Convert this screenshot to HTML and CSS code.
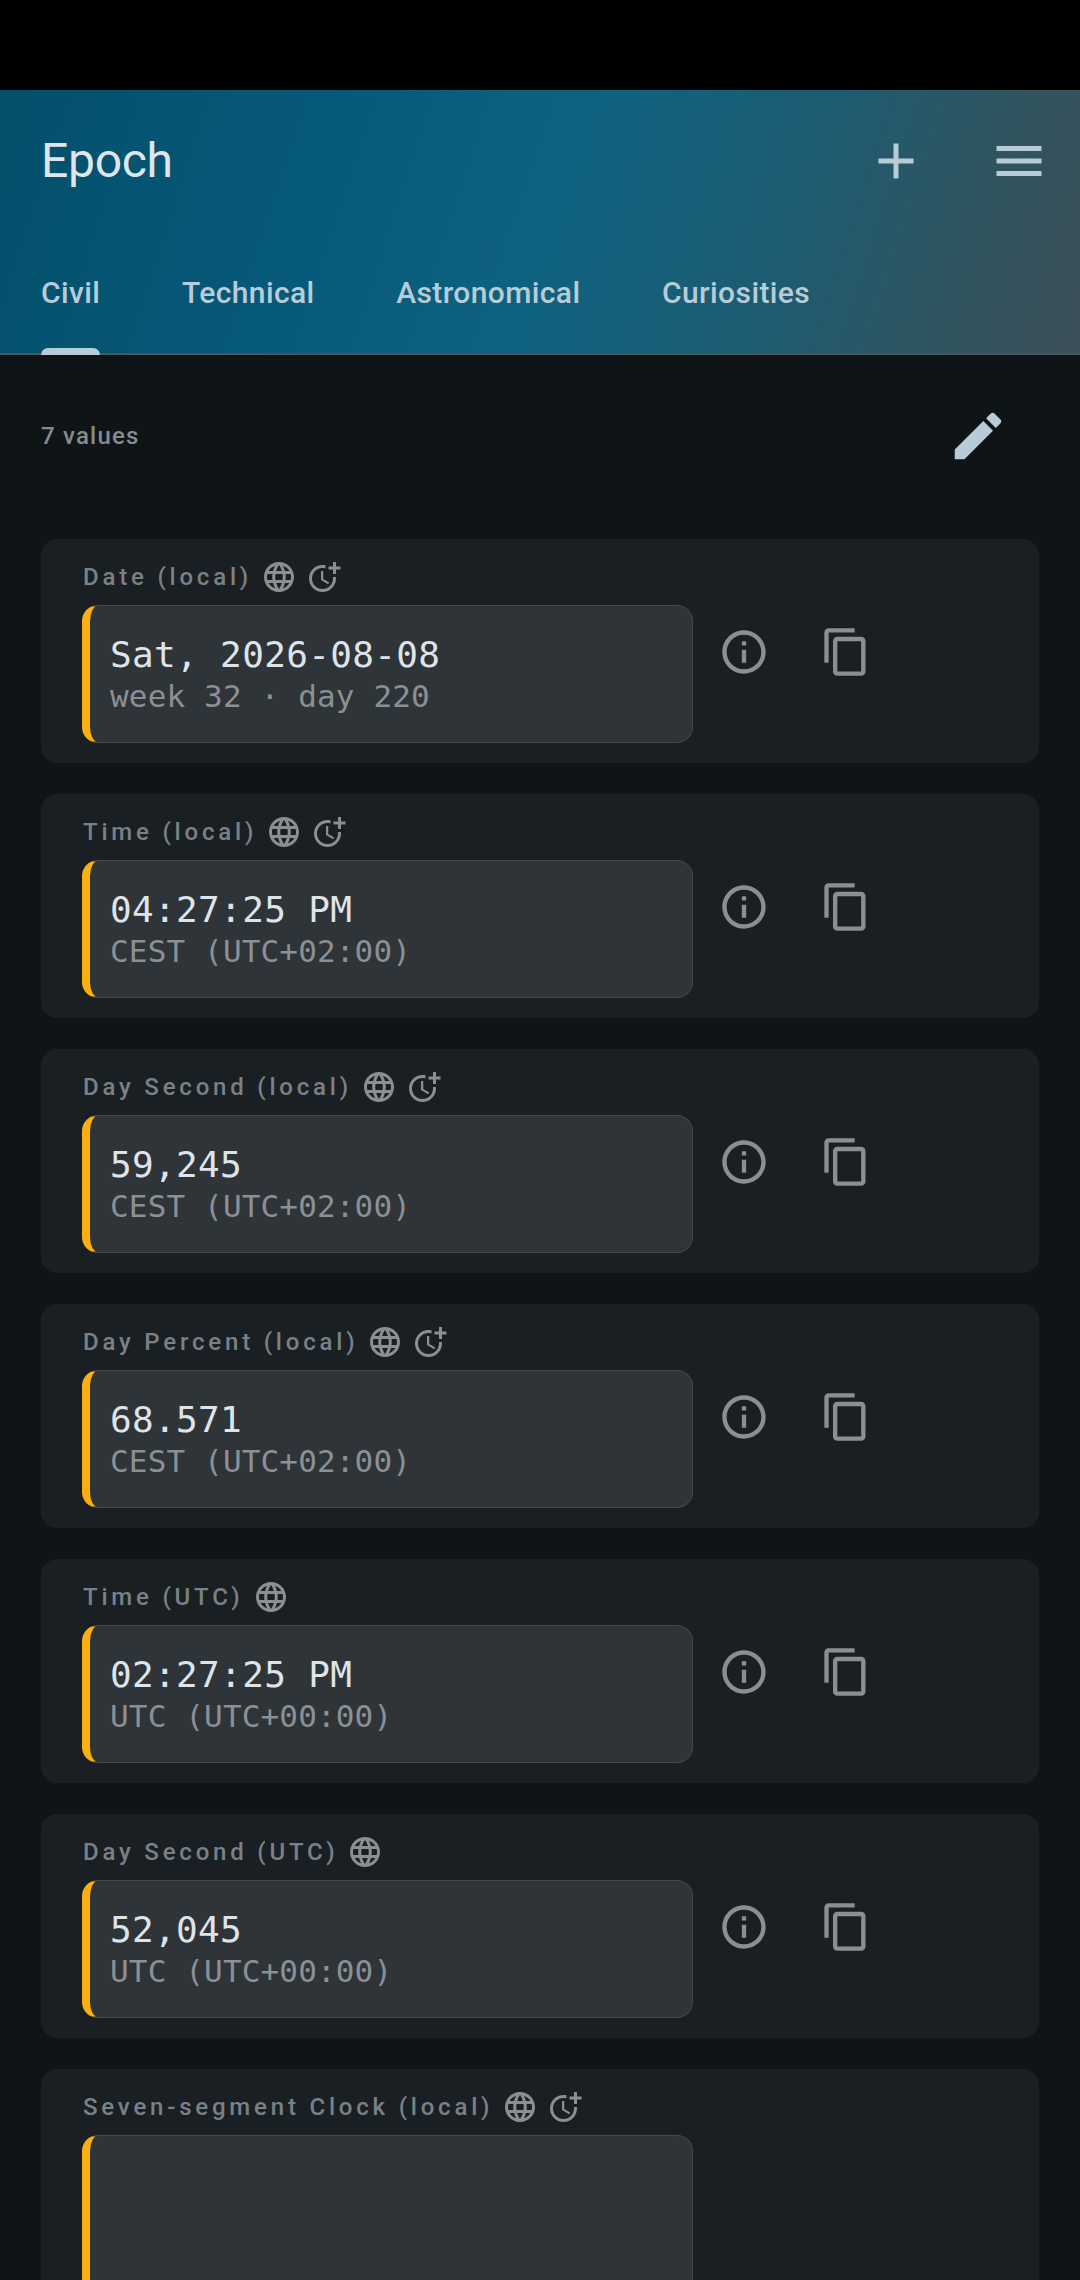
FILE: index.html
```html
<!doctype html>
<html lang="en">
<head>
    <meta charset="utf-8">
    <title>Epoch</title>
    <link rel="stylesheet" href="styles.css">
</head>
<body>
<svg class="defs" aria-hidden="true">
    <symbol id="icGlobe" viewBox="0 0 24 24"><path d="M11.99 2C6.47 2 2 6.48 2 12s4.47 10 9.99 10C17.52 22 22 17.52 22 12S17.52 2 11.99 2zm6.93 6h-2.95c-.32-1.25-.78-2.45-1.38-3.56 1.84.63 3.37 1.91 4.33 3.56zM12 4.04c.83 1.2 1.48 2.53 1.91 3.96h-3.82c.43-1.43 1.08-2.76 1.91-3.96zM4.26 14C4.1 13.36 4 12.69 4 12s.1-1.36.26-2h3.38c-.08.66-.14 1.32-.14 2 0 .68.06 1.34.14 2H4.26zm.82 2h2.95c.32 1.25.78 2.45 1.38 3.56-1.84-.63-3.37-1.9-4.33-3.56zm2.95-8H5.08c.96-1.66 2.49-2.93 4.33-3.56C8.81 5.55 8.35 6.75 8.03 8zM12 19.96c-.83-1.2-1.48-2.53-1.91-3.96h3.82c-.43 1.43-1.08 2.76-1.91 3.96zM14.34 14H9.66c-.09-.66-.16-1.32-.16-2 0-.68.07-1.35.16-2h4.68c.09.65.16 1.32.16 2 0 .68-.07 1.34-.16 2zm.25 5.56c.6-1.11 1.06-2.31 1.38-3.56h2.95c-.96 1.65-2.49 2.93-4.33 3.56zM16.36 14c.08-.66.14-1.32.14-2 0-.68-.06-1.34-.14-2h3.38c.16.64.26 1.31.26 2s-.1 1.36-.26 2h-3.38z"/></symbol>
    <symbol id="icMoreTime" viewBox="0 0 24 24"><path d="M10 8v6l4.7 2.9.8-1.2-4-2.4V8zM17.92 12c.05.33.08.66.08 1 0 3.9-3.1 7-7 7s-7-3.1-7-7 3.1-7 7-7c.7 0 1.37.1 2 .29V4.23C12.36 4.08 11.69 4 11 4c-5 0-9 4-9 9s4 9 9 9 9-4 9-9c0-.34-.02-.67-.06-1h-2.02zM20 5V2h-2v3h-3v2h3v3h2V7h3V5z"/></symbol>
    <symbol id="icInfo" viewBox="0 0 24 24"><path d="M11 7h2v2h-2zm0 4h2v6h-2zm1-9C6.48 2 2 6.48 2 12s4.48 10 10 10 10-4.48 10-10S17.52 2 12 2zm0 18c-4.41 0-8-3.59-8-8s3.59-8 8-8 8 3.59 8 8-3.59 8-8 8z"/></symbol>
    <symbol id="icCopy" viewBox="0 0 24 24"><path d="M16 1H4c-1.1 0-2 .9-2 2v14h2V3h12V1zm3 4H8c-1.1 0-2 .9-2 2v14c0 1.1.9 2 2 2h11c1.1 0 2-.9 2-2V7c0-1.1-.9-2-2-2zm0 16H8V7h11v14z"/></symbol>
</svg>

<div class="statusBar"></div>

<!--  header  -->
<header class="appHeader">
    <div class="toolbar">
        <h1 class="appTitle">Epoch</h1>
        <svg class="barIcon addIcon" viewBox="0 0 24 24"><path d="M19 13h-6v6h-2v-6H5v-2h6V5h2v6h6v2z"/></svg>
        <svg class="barIcon" viewBox="0 0 24 24"><path d="M3 18h18v-2H3v2zm0-5h18v-2H3v2zm0-7v2h18V6H3z"/></svg>
    </div>
    <nav class="tabs">
        <span class="tab active">Civil</span>
        <span class="tab">Technical</span>
        <span class="tab">Astronomical</span>
        <span class="tab">Curiosities</span>
    </nav>
</header>

<div class="listHead">
    <span class="valueCount">7 values</span>
    <svg class="editIcon" viewBox="0 0 24 24"><path d="M3 17.25V21h3.75L17.81 9.94l-3.75-3.75L3 17.25zM20.71 7.04c.39-.39.39-1.02 0-1.41l-2.34-2.34c-.39-.39-1.02-.39-1.41 0l-1.83 1.83 3.75 3.75 1.83-1.83z"/></svg>
</div>

<!--  value cards  -->
<main class="cardList">
    <section class="card">
        <div class="cardLabel">
            <span>Date (local)</span>
            <svg class="tagIcon"><use href="#icGlobe"/></svg>
            <svg class="tagIcon"><use href="#icMoreTime"/></svg>
        </div>
        <div class="cardRow">
            <div class="valueBox">
                <p class="mainValue">Sat, 2026-08-08</p>
                <p class="subValue">week 32 · day 220</p>
            </div>
            <div class="actions">
                <svg class="actionIcon"><use href="#icInfo"/></svg>
                <svg class="actionIcon"><use href="#icCopy"/></svg>
            </div>
        </div>
    </section>

    <section class="card">
        <div class="cardLabel">
            <span>Time (local)</span>
            <svg class="tagIcon"><use href="#icGlobe"/></svg>
            <svg class="tagIcon"><use href="#icMoreTime"/></svg>
        </div>
        <div class="cardRow">
            <div class="valueBox">
                <p class="mainValue">04:27:25 PM</p>
                <p class="subValue">CEST (UTC+02:00)</p>
            </div>
            <div class="actions">
                <svg class="actionIcon"><use href="#icInfo"/></svg>
                <svg class="actionIcon"><use href="#icCopy"/></svg>
            </div>
        </div>
    </section>

    <section class="card">
        <div class="cardLabel">
            <span>Day Second (local)</span>
            <svg class="tagIcon"><use href="#icGlobe"/></svg>
            <svg class="tagIcon"><use href="#icMoreTime"/></svg>
        </div>
        <div class="cardRow">
            <div class="valueBox">
                <p class="mainValue">59,245</p>
                <p class="subValue">CEST (UTC+02:00)</p>
            </div>
            <div class="actions">
                <svg class="actionIcon"><use href="#icInfo"/></svg>
                <svg class="actionIcon"><use href="#icCopy"/></svg>
            </div>
        </div>
    </section>

    <section class="card">
        <div class="cardLabel">
            <span>Day Percent (local)</span>
            <svg class="tagIcon"><use href="#icGlobe"/></svg>
            <svg class="tagIcon"><use href="#icMoreTime"/></svg>
        </div>
        <div class="cardRow">
            <div class="valueBox">
                <p class="mainValue">68.571</p>
                <p class="subValue">CEST (UTC+02:00)</p>
            </div>
            <div class="actions">
                <svg class="actionIcon"><use href="#icInfo"/></svg>
                <svg class="actionIcon"><use href="#icCopy"/></svg>
            </div>
        </div>
    </section>

    <section class="card">
        <div class="cardLabel">
            <span>Time (UTC)</span>
            <svg class="tagIcon"><use href="#icGlobe"/></svg>
        </div>
        <div class="cardRow">
            <div class="valueBox">
                <p class="mainValue">02:27:25 PM</p>
                <p class="subValue">UTC (UTC+00:00)</p>
            </div>
            <div class="actions">
                <svg class="actionIcon"><use href="#icInfo"/></svg>
                <svg class="actionIcon"><use href="#icCopy"/></svg>
            </div>
        </div>
    </section>

    <section class="card">
        <div class="cardLabel">
            <span>Day Second (UTC)</span>
            <svg class="tagIcon"><use href="#icGlobe"/></svg>
        </div>
        <div class="cardRow">
            <div class="valueBox">
                <p class="mainValue">52,045</p>
                <p class="subValue">UTC (UTC+00:00)</p>
            </div>
            <div class="actions">
                <svg class="actionIcon"><use href="#icInfo"/></svg>
                <svg class="actionIcon"><use href="#icCopy"/></svg>
            </div>
        </div>
    </section>

    <section class="card">
        <div class="cardLabel">
            <span>Seven-segment Clock (local)</span>
            <svg class="tagIcon"><use href="#icGlobe"/></svg>
            <svg class="tagIcon"><use href="#icMoreTime"/></svg>
        </div>
        <div class="cardRow">
            <div class="valueBox clockBox"></div>
        </div>
    </section>
</main>
</body>
</html>
```
FILE: styles.css
```css
* {
    margin: 0;
    padding: 0;
    box-sizing: border-box;
}

html, body {
    width: 1080px;
    height: 2280px;
    overflow: hidden;
    background: #0f1417;
    font-family: Roboto, "Noto Sans", sans-serif;
}

.defs {
    display: none;
}

.statusBar {
    height: 90px;
    background: #000;
}

.appHeader {
    height: 265px;
    display: flex;
    flex-direction: column;
    background: linear-gradient(108deg, #024f69 0%, #07597a 30%, #0f627f 52%, #1c5c73 70%, #30545f 88%, #3b4e57 100%);
    border-bottom: 2px solid #4a575c;
}

.toolbar {
    height: 140px;
    display: flex;
    align-items: center;
    padding: 2px 31px 0 41px;
}

.appTitle {
    flex: 1;
    margin-top: -1px;
    font-size: 48px;
    font-weight: 400;
    letter-spacing: -0.3px;
    color: #dfe5e9;
}

.barIcon {
    width: 60px;
    height: 60px;
    fill: #b8ccd7;
}

.addIcon {
    margin-right: 63px;
}

.tabs {
    flex: 1;
    display: flex;
    gap: 81.5px;
    padding-left: 41px;
}

.tab {
    position: relative;
    padding-top: 43px;
    font-size: 30px;
    font-weight: 500;
    line-height: 40px;
    letter-spacing: 0.4px;
    color: #b8ccd7;
}

.tab.active::after {
    content: "";
    position: absolute;
    left: 0;
    right: 0;
    bottom: -2px;
    height: 7px;
    border-radius: 7px 7px 0 0;
    background: #b8ccd7;
}

.listHead {
    height: 162px;
    display: flex;
    align-items: center;
    justify-content: space-between;
    padding: 0 71px 0 41px;
    margin-bottom: 22px;
}

.valueCount {
    font-size: 24px;
    font-weight: 500;
    letter-spacing: 1.2px;
    color: #858c90;
}

.editIcon {
    width: 62px;
    height: 62px;
    fill: #b8ccd7;
}

.cardList {
    display: flex;
    flex-direction: column;
    gap: 31px;
    padding: 0 41px;
}

.card {
    flex: none;
    padding: 20px 0 20px 41px;
    border-radius: 16px;
    background: #1a1f23;
}

.cardLabel {
    height: 36px;
    display: flex;
    align-items: center;
    gap: 9px;
    margin-bottom: 10px;
    padding-left: 1px;
    font-size: 24px;
    font-weight: 500;
    letter-spacing: 3.8px;
    color: #7a8186;
}

.tagIcon {
    width: 36px;
    height: 36px;
    fill: #8a8f93;
}

.cardRow {
    display: flex;
    align-items: flex-start;
}

.valueBox {
    width: 611px;
    height: 138px;
    padding: 27px 0 0 20px;
    background: #2f3438;
    border: 1px solid #45484a;
    border-left: 8px solid #fbb010;
    border-radius: 16px;
    font-family: "DejaVu Sans Mono", "Liberation Mono", monospace;
}

.clockBox {
    height: 300px;
}

.mainValue {
    font-size: 36px;
    line-height: 43px;
    letter-spacing: 0.35px;
    color: #dfe4e8;
}

.subValue {
    font-size: 31px;
    line-height: 40px;
    letter-spacing: 0.15px;
    color: #8b9094;
}

.actions {
    display: flex;
    gap: 50px;
    padding: 21px 0 0 25px;
}

.actionIcon {
    width: 52px;
    height: 52px;
    fill: #8a8f93;
}
```
